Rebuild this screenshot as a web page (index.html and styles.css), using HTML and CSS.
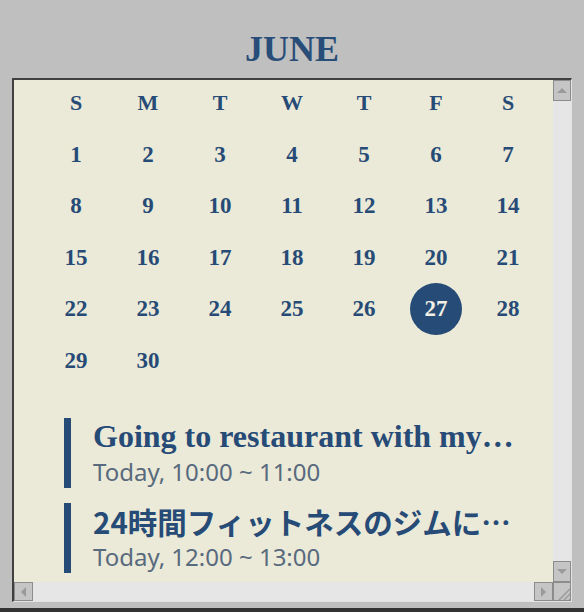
FILE: index.html
```html
<!DOCTYPE html>
<html>
<head>
<meta charset="utf-8">
<link rel="stylesheet" href="styles.css">
</head>
<body>
<div class="page">
  <h1 class="month">JUNE</h1>
  <div class="frame">
    <div class="main">
      <div class="content">
        <div class="weekdays">
          <span>S</span><span>M</span><span>T</span><span>W</span><span>T</span><span>F</span><span>S</span>
        </div>
        <div class="days">
          <span>1</span><span>2</span><span>3</span><span>4</span><span>5</span><span>6</span><span>7</span>
          <span>8</span><span>9</span><span>10</span><span>11</span><span>12</span><span>13</span><span>14</span>
          <span>15</span><span>16</span><span>17</span><span>18</span><span>19</span><span>20</span><span>21</span>
          <span>22</span><span>23</span><span>24</span><span>25</span><span>26</span><span class="today"><b>27</b></span><span>28</span>
          <span>29</span><span>30</span>
        </div>
        <div class="events">
          <div class="event">
            <div class="ev-title">Going to restaurant with my…</div>
            <div class="ev-time">Today, 10:00 ~ 11:00</div>
          </div>
          <div class="event">
            <div class="ev-title jp">24時間フィットネスのジムに…</div>
            <div class="ev-time">Today, 12:00 ~ 13:00</div>
          </div>
        </div>
      </div>
      <div class="vscroll">
        <div class="btn up"><span class="tri tri-up"></span></div>
        <div class="track"></div>
        <div class="btn down"><span class="tri tri-down"></span></div>
      </div>
    </div>
    <div class="hscroll">
      <div class="btn left"><span class="tri tri-left"></span></div>
      <div class="htrack"></div>
      <div class="btn right"><span class="tri tri-right"></span></div>
      <div class="corner">
        <svg width="18" height="18" viewBox="0 0 18 18">
          <path d="M17 5 L5 17 M17 10 L10 17 M17 15 L15 17" stroke="#9a9a9a" stroke-width="1.5" fill="none"/>
        </svg>
      </div>
    </div>
  </div>
  <div class="below"></div>
</div>
</body>
</html>
```

FILE: styles.css
```css
html, body {
  margin: 0;
  padding: 0;
  background: #bfbfbf;
}
.page {
  width: 584px;
  height: 612px;
  overflow: hidden;
  display: flex;
  flex-direction: column;
}
.month {
  margin: 0;
  height: 78px;
  box-sizing: border-box;
  padding-top: 29px;
  text-align: center;
  font-family: "Liberation Serif", serif;
  font-weight: bold;
  font-size: 36px;
  line-height: 40px;
  color: #284d78;
}
.frame {
  margin: 0 12px;
  height: 524px;
  flex: none;
  box-sizing: border-box;
  border-top: 2px solid #404040;
  border-left: 2px solid #404040;
  border-right: 1px solid #e2e2e2;
  border-bottom: 1px solid #e2e2e2;
  display: flex;
  flex-direction: column;
}
.main {
  flex: 1;
  display: flex;
  min-height: 0;
}
.content {
  flex: 1;
  background: #ebe9d7;
  overflow: hidden;
  padding-left: 26px;
  color: #264b76;
  font-family: "Liberation Serif", serif;
  font-weight: bold;
}
.weekdays {
  display: grid;
  grid-template-columns: repeat(7, 72px);
  height: 46px;
  margin-bottom: 3px;
  align-items: center;
  font-size: 22px;
}
.weekdays span, .days span {
  text-align: center;
}
.days {
  display: grid;
  grid-template-columns: repeat(7, 72px);
  grid-auto-rows: 51.5px;
  align-items: center;
  font-size: 23px;
}
.days span {
  display: flex;
  align-items: center;
  justify-content: center;
  height: 100%;
}
.today b {
  width: 52px;
  height: 52px;
  border-radius: 50%;
  background: #264b76;
  color: #f2f0e4;
  display: flex;
  align-items: center;
  justify-content: center;
}
.events {
  margin-top: 31px;
  margin-left: 24px;
  display: flex;
  flex-direction: column;
  gap: 15px;
}
.event {
  border-left: 7px solid #264b76;
  padding-left: 22px;
  width: 430px;
  height: 70px;
}
.ev-title {
  font-size: 32px;
  line-height: 37px;
  height: 37px;
  white-space: nowrap;
}
.ev-title.jp {
  font-family: "Noto Sans CJK JP", sans-serif;
  font-size: 29.5px;
  line-height: 36px;
  height: 36px;
}
.ev-time {
  font-family: "Noto Sans", sans-serif;
  font-weight: normal;
  font-size: 24px;
  line-height: 30px;
  margin-top: 2px;
  color: #586a7d;
}
.jp + .ev-time {
  margin-top: 3px;
}
.vscroll {
  width: 18px;
  display: flex;
  flex-direction: column;
  background: #e6e6e6;
}
.track { flex: 1; }
.btn {
  box-sizing: border-box;
  width: 18px;
  height: 21px;
  background: #c5c5c5;
  border: 1px solid #8c8c8c;
  display: flex;
  align-items: center;
  justify-content: center;
}
.hscroll {
  height: 19px;
  display: flex;
  background: #e6e6e6;
}
.hscroll .btn {
  width: 19px;
  height: 19px;
}
.htrack { flex: 1; }
.corner {
  width: 18px;
  height: 19px;
  box-sizing: border-box;
  background: #c5c5c5;
  border: 1px solid #8c8c8c;
  overflow: hidden;
}
.corner svg { display: block; }
.tri {
  width: 0;
  height: 0;
  border: 5px solid transparent;
}
.tri-up { border-bottom-color: #9a9a9a; border-top-width: 0; }
.tri-down { border-top-color: #9a9a9a; border-bottom-width: 0; }
.tri-left { border-right-color: #9a9a9a; border-left-width: 0; }
.tri-right { border-left-color: #9a9a9a; border-right-width: 0; }
.below {
  margin-top: 6px;
  flex: 1;
  border-top: 4px solid #333333;
  background: #bfbfbf;
}
```
